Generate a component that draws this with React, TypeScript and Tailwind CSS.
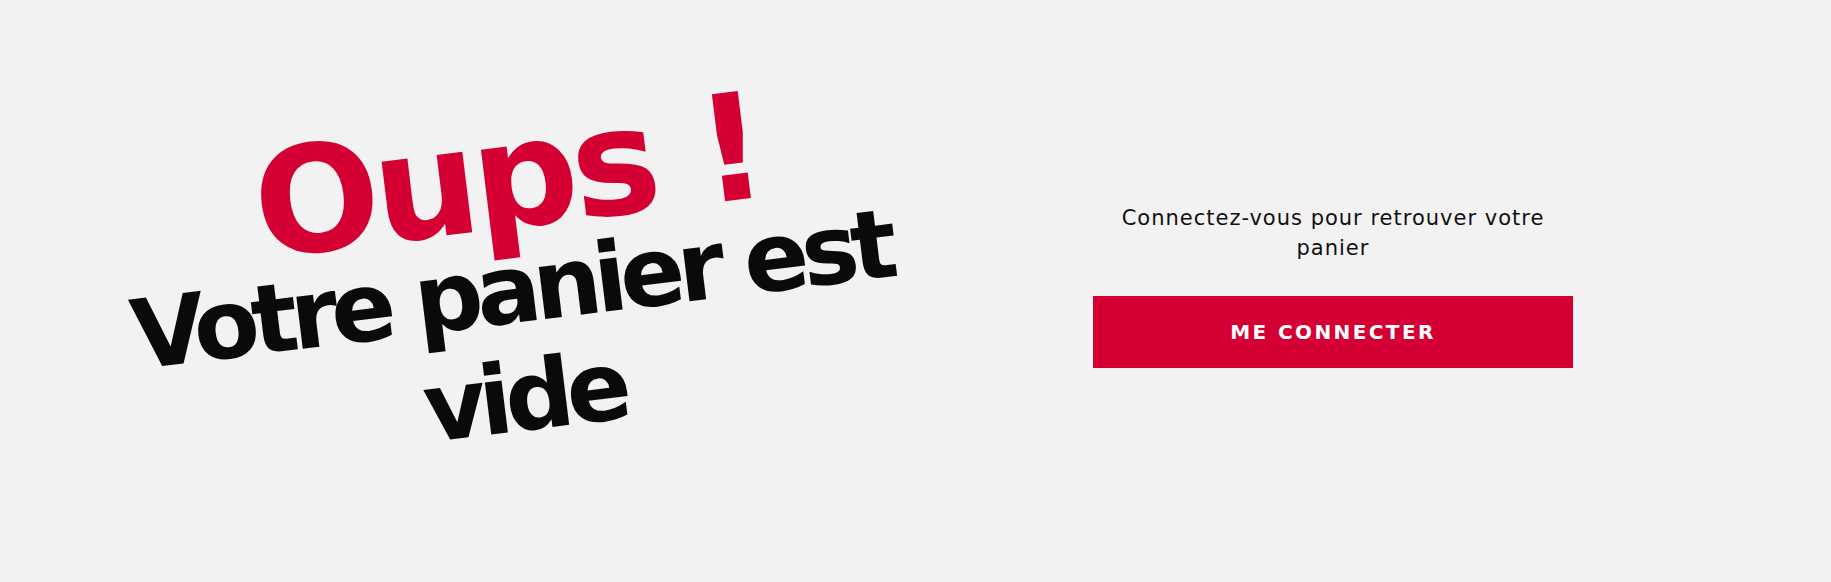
import React from "react";

export default function App() {
	return (
		<div className="w-full h-[582px] bg-[#f2f2f2] overflow-hidden font-['DejaVu_Sans',sans-serif]">
			<div className="grid grid-cols-2 h-full pl-[100px] pr-[87px]">
				{/* Left: tilted title */}
				<div className="flex items-center justify-center">
					<h1 className="w-full text-center font-bold rotate-[-7deg]">
						<span className="block pl-[20px] mb-[12px] text-[148px] leading-[94px] tracking-[-6px] text-[#d40034]">
							Oups !
						</span>
						<span className="block text-[96px] leading-[108px] tracking-[-7px] text-[#0a0a0a]">
							Votre panier est
							<br />
							vide
						</span>
					</h1>
				</div>

				{/* Right: login prompt */}
				<div className="flex items-center justify-center pb-[11px]">
					<div className="w-[480px] flex flex-col items-center">
						<p className="text-center text-[21px] leading-[30px] tracking-[1px] text-[#111]">
							Connectez-vous pour retrouver votre
							<br />
							panier
						</p>
						<button className="mt-[33px] w-[480px] h-[72px] bg-[#d40034] text-white text-[20px] font-bold tracking-[2.4px] uppercase">
							Me connecter
						</button>
					</div>
				</div>
			</div>
		</div>
	);
}
